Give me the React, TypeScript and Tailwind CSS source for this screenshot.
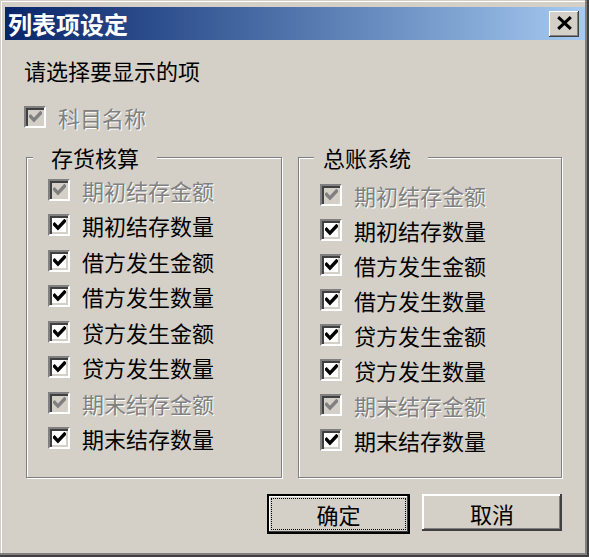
import clsx from 'clsx';

const LEFT = [
  { label: '期初结存金额', disabled: true },
  { label: '期初结存数量' },
  { label: '借方发生金额' },
  { label: '借方发生数量' },
  { label: '贷方发生金额' },
  { label: '贷方发生数量' },
  { label: '期末结存金额', disabled: true },
  { label: '期末结存数量' },
];

function CheckBox({ disabled }: { disabled?: boolean }) {
  return (
    <span
      className={clsx(
        'flex h-[22px] w-[22px] shrink-0 items-center justify-center border-2 border-t-[#808080] border-l-[#808080] border-r-white border-b-white shadow-[inset_2px_2px_0_#404040,inset_-2px_-2px_0_#d4d0c8]',
        disabled ? 'bg-[#d4d0c8]' : 'bg-white',
      )}
    >
      <svg viewBox="0 0 10 10" className="ml-[1px] mt-[1px] h-[13px] w-[13px]">
        <polyline
          points="1.2,4.2 3.8,7 8.8,1.6"
          fill="none"
          stroke={disabled ? '#808080' : '#000'}
          strokeWidth="2.6"
          strokeLinecap="square"
        />
      </svg>
    </span>
  );
}

function Option({ label, disabled, className }: { label: string; disabled?: boolean; className?: string }) {
  return (
    <div className={clsx('flex items-center gap-[12px]', className)}>
      <CheckBox disabled={disabled} />
      <span
        className={clsx(
          'leading-[26px]',
          disabled ? 'text-[#808080] [text-shadow:1px_1px_0_#fff]' : 'text-black',
        )}
      >
        {label}
      </span>
    </div>
  );
}

function Group({
  title,
  width,
  legendClass,
  padTop,
  rowHeight,
}: {
  title: string;
  width: string;
  legendClass: string;
  padTop: string;
  rowHeight: string;
}) {
  return (
    <div
      className={clsx(
        'relative h-[321px] border border-[#808080] shadow-[1px_1px_0_#fff,inset_1px_1px_0_#fff]',
        width,
        padTop,
      )}
    >
      <span className={clsx('absolute top-[-14px] bg-[#d4d0c8] leading-[26px]', legendClass)}>
        {title}
      </span>
      <div className="flex flex-col pl-[21px]">
        {LEFT.map((o) => (
          <Option key={o.label} label={o.label} disabled={o.disabled} className={rowHeight} />
        ))}
      </div>
    </div>
  );
}

export default function App() {
  return (
    <div className="h-[557px] w-[589px] bg-[#d4d0c8] pt-[7px] pl-[5px] pr-[4px] text-[22px] text-black shadow-[inset_-2px_-2px_0_#404040,inset_-4px_-4px_0_#808080,inset_1px_1px_0_#d4d0c8,inset_2px_2px_0_#fff] [font-family:'Noto_Sans_CJK_SC','Noto_Sans',sans-serif]">
      <div className="flex h-[33px] items-center justify-between bg-gradient-to-r from-[#0a246a] to-[#a6caf0] pl-[3px] pr-[6px]">
        <span className="text-[24px] font-bold leading-none text-white">列表项设定</span>
        <button className="flex h-[26px] w-[30px] items-center justify-center bg-[#d4d0c8] shadow-[inset_-1px_-1px_0_#404040,inset_1px_1px_0_#fff,inset_-2px_-2px_0_#808080]">
          <svg viewBox="0 0 12 10" className="mb-[1px] h-[14px] w-[17px]">
            <path d="M1.5 0.8 L10.5 9.2 M10.5 0.8 L1.5 9.2" stroke="#000" strokeWidth="2.2" fill="none" />
          </svg>
        </button>
      </div>

      <div className="flex flex-col pl-[19px] pr-[23px]">
        <p className="mt-[17px] leading-[26px]">请选择要显示的项</p>
        <Option label="科目名称" disabled className="mt-[21px] h-[26px]" />

        <div className="mt-[27px] ml-[2px] flex gap-[16px]">
          <Group
            title="存货核算"
            width="w-[256px]"
            legendClass="left-[6px] px-[18px]"
            padTop="pt-[14px]"
            rowHeight="h-[35.5px]"
          />
          <Group
            title="总账系统"
            width="w-[264px]"
            legendClass="left-[15px] pl-[9px] pr-[17px]"
            padTop="pt-[19px]"
            rowHeight="h-[35px]"
          />
        </div>

        <div className="mt-[16px] flex items-start justify-end gap-[12px]">
          <button className="flex h-[40px] w-[143px] border-2 border-black bg-[#d4d0c8] p-[2px] shadow-[inset_-1px_-1px_0_#404040,inset_1px_1px_0_#fff]">
            <span className="flex flex-1 items-center justify-center border border-dotted border-black leading-none">
              确定
            </span>
          </button>
          <button className="flex h-[37px] w-[140px] items-center justify-center bg-[#d4d0c8] leading-none shadow-[inset_-2px_-2px_0_#404040,inset_2px_2px_0_#fff,inset_-3px_-3px_0_#808080]">
            取消
          </button>
        </div>
      </div>
    </div>
  );
}
